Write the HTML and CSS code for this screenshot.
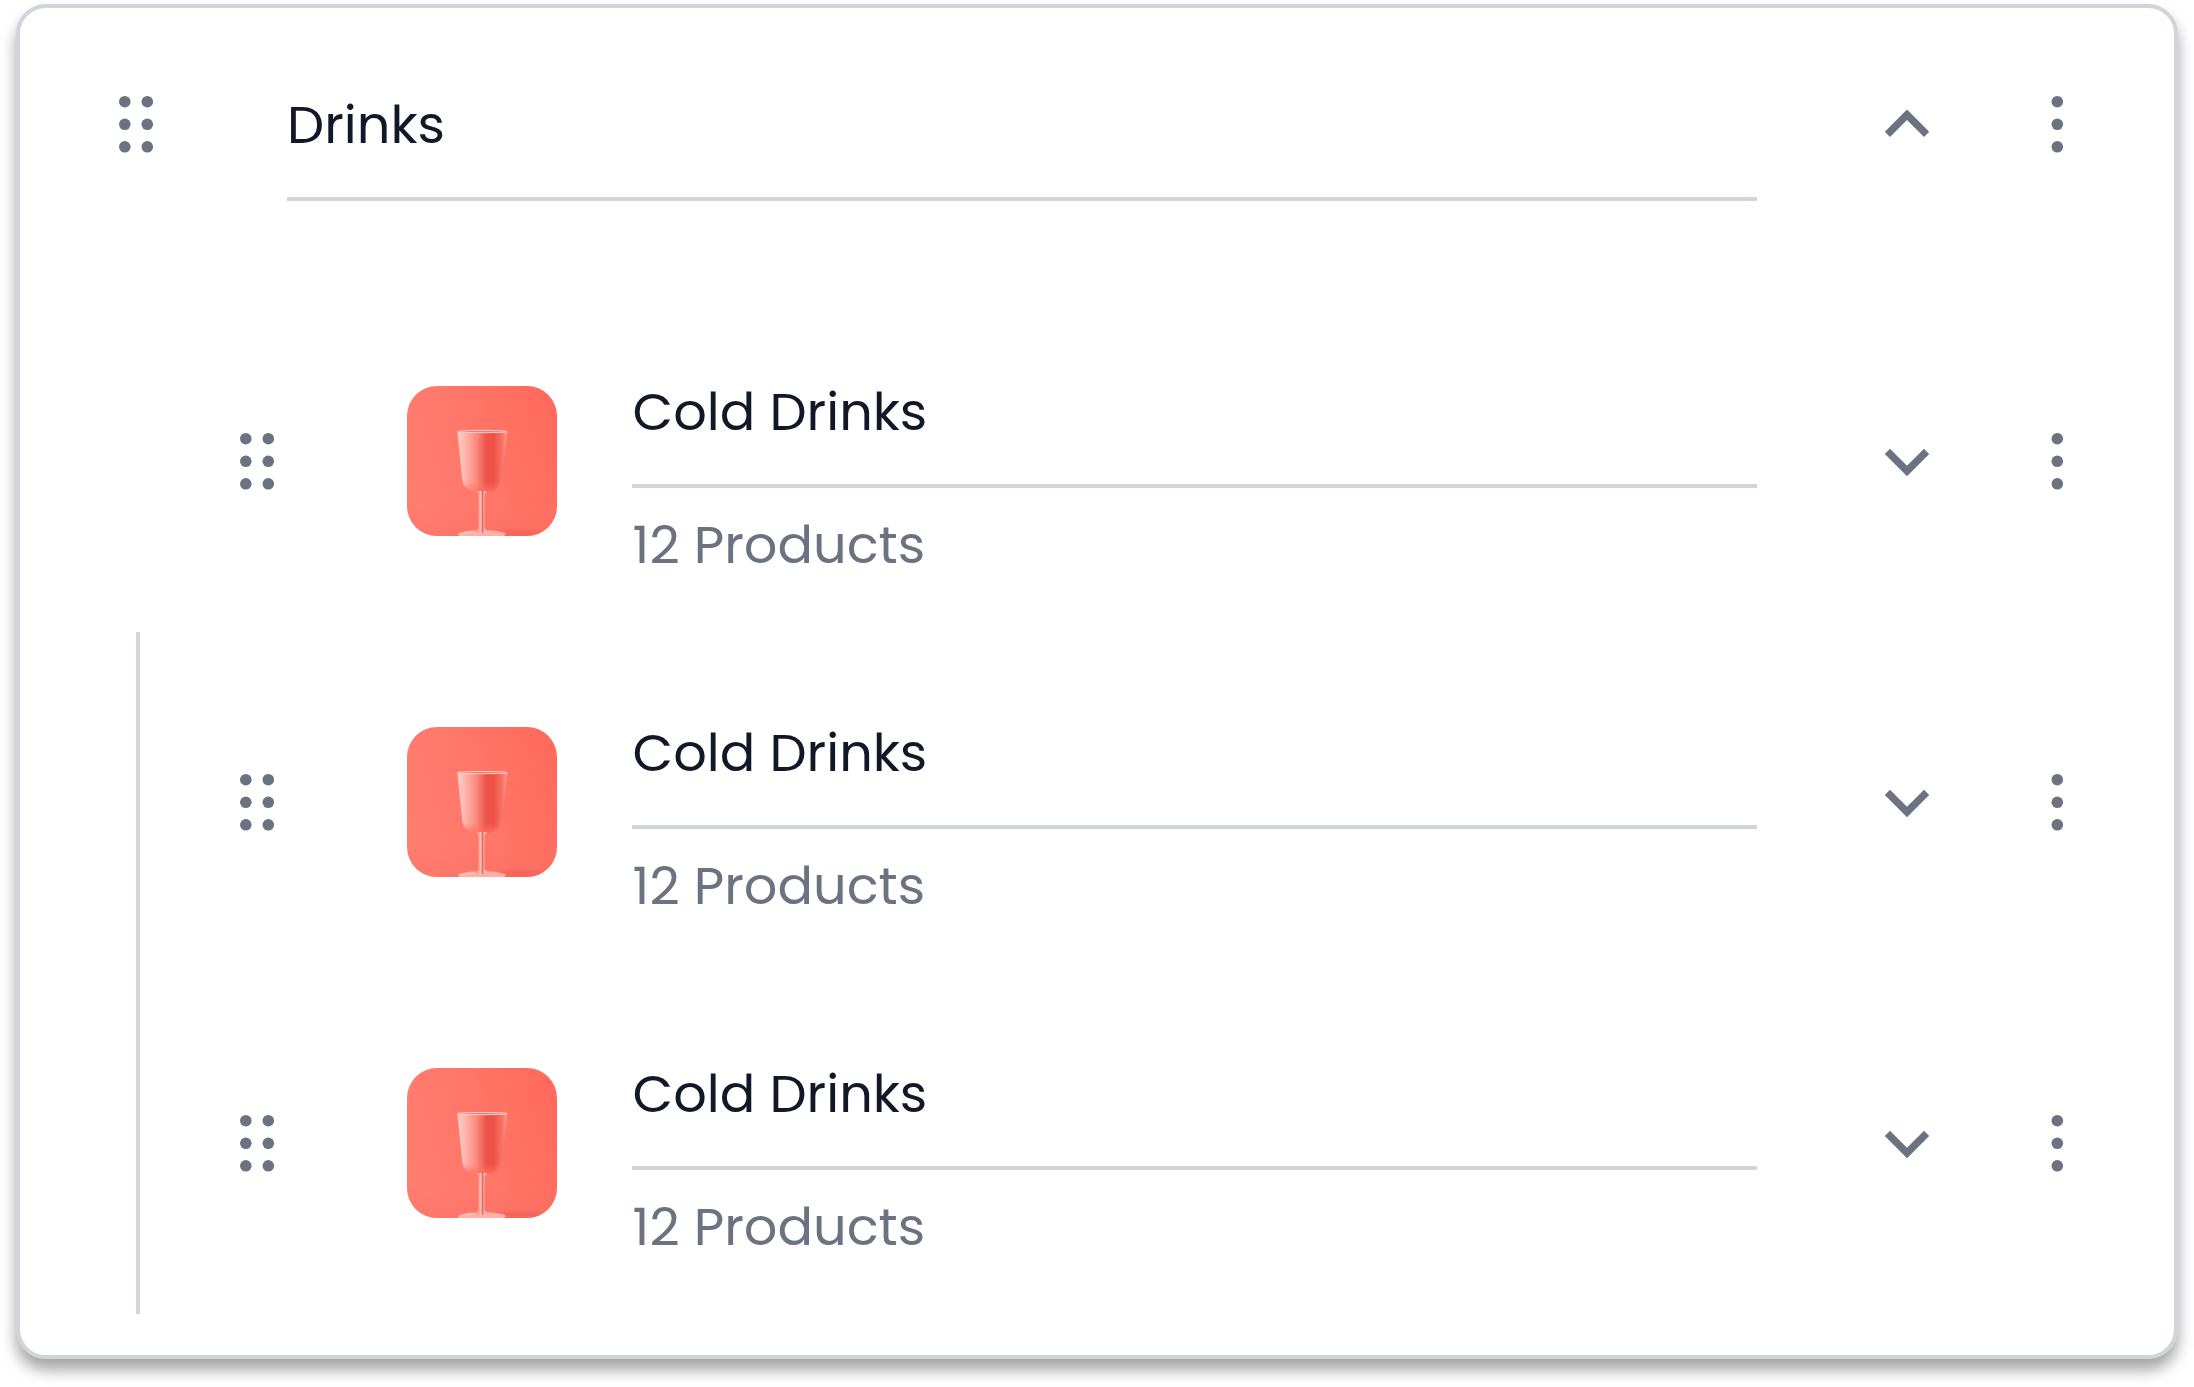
FILE: index.html
```html
<!DOCTYPE html>
<html lang="en">
<head>
<meta charset="utf-8">
<title>Drinks</title>
<link rel="stylesheet" href="styles.css">
</head>
<body>
<svg class="sprite" aria-hidden="true">
  <defs>
    <linearGradient id="wall" x1="0" y1="0.6" x2="1" y2="0.3">
      <stop offset="0" stop-color="#ff7e70"/><stop offset="0.5" stop-color="#ff7668"/><stop offset="1" stop-color="#ff6a5c"/>
    </linearGradient>
    <linearGradient id="floor" x1="0" y1="0" x2="0" y2="1">
      <stop offset="0" stop-color="#f96d61" stop-opacity="0"/><stop offset="1" stop-color="#f96d61" stop-opacity="0.4"/>
    </linearGradient>
    <linearGradient id="bowl" x1="0" y1="0" x2="1" y2="0">
      <stop offset="0" stop-color="#ffcdc6"/><stop offset="0.12" stop-color="#ffbcb3"/><stop offset="0.38" stop-color="#fb8a7e"/><stop offset="0.58" stop-color="#ee5248"/><stop offset="0.72" stop-color="#ee5046"/><stop offset="0.9" stop-color="#f97568"/><stop offset="1" stop-color="#ffa196"/>
    </linearGradient>
    <linearGradient id="bowl-end" x1="0" y1="0" x2="0" y2="1">
      <stop offset="0.84" stop-color="#ff7164" stop-opacity="0"/><stop offset="1" stop-color="#ff7164" stop-opacity="0.8"/>
    </linearGradient>
    <linearGradient id="stem" gradientUnits="userSpaceOnUse" x1="71.5" y1="0" x2="77.5" y2="0">
      <stop offset="0" stop-color="#ff9a8e"/><stop offset="0.4" stop-color="#ffc6be"/><stop offset="0.65" stop-color="#e8685e"/><stop offset="1" stop-color="#ffb5ab"/>
    </linearGradient>
    <radialGradient id="shade">
      <stop offset="0" stop-color="#e9574d" stop-opacity="0.6"/><stop offset="1" stop-color="#e9574d" stop-opacity="0"/>
    </radialGradient>
  </defs>
  <symbol id="glass" viewBox="0 0 150 150">
    <rect width="150" height="150" fill="url(#wall)"/>
    <rect y="118" width="150" height="32" fill="url(#floor)"/>
    <ellipse cx="112" cy="147" rx="36" ry="6" fill="url(#shade)"/>
    <path d="M50.3 45.5 L55 92 Q56 105 70 105.5 H80 Q93 105 94.5 92 L100.5 45.5 Z" fill="url(#bowl)"/>
    <path d="M50.3 45.5 L55 92 Q56 105 70 105.5 H80 Q93 105 94.5 92 L100.5 45.5 Z" fill="url(#bowl-end)"/>
    <ellipse cx="75.4" cy="45.6" rx="24.6" ry="1.1" fill="#f4776b" stroke="#ffd0c9" stroke-width="1"/>
    <ellipse cx="75" cy="148.3" rx="23.8" ry="4" fill="#ffb0a6"/>
    <path d="M52 150 Q54 146.5 71 145.5" fill="none" stroke="#ffd0c9" stroke-width="0.8"/>
    <path d="M69.500 105 Q71.500 107 71.500 111 L71.300 141 Q71 144 67 145.5 Q75 148 82 145.5 Q77.8 144 77.500 141 L77.500 111 Q77.500 107 80 105 Z" fill="url(#stem)"/>
  </symbol>
  <symbol id="drag" viewBox="0 0 90 90">
    <circle cx="33.8" cy="22.7" r="5.8"/><circle cx="56.3" cy="22.7" r="5.8"/>
    <circle cx="33.8" cy="45.3" r="5.8"/><circle cx="56.3" cy="45.3" r="5.8"/>
    <circle cx="33.8" cy="67.8" r="5.8"/><circle cx="56.3" cy="67.8" r="5.8"/>
  </symbol>
  <symbol id="more" viewBox="0 0 90 90">
    <circle cx="45.3" cy="22.7" r="5.8"/><circle cx="45.3" cy="45.3" r="5.8"/><circle cx="45.3" cy="67.8" r="5.8"/>
  </symbol>
  <symbol id="up" viewBox="0 0 90 90">
    <path d="M22.8 52.8 L45 30.6 L67.2 52.8 L62 58 L45 41 L28 58 Z"/>
  </symbol>
  <symbol id="down" viewBox="0 0 90 90">
    <path d="M22.8 38 L45 60.2 L67.2 38 L62 32.8 L45 49.8 L28 32.8 Z"/>
  </symbol>
</svg>

<main class="card">
  <header class="row row-parent">
    <svg class="icon"><use href="#drag"/></svg>
    <div class="info"><div class="title">Drinks</div></div>
    <svg class="icon"><use href="#up"/></svg>
    <svg class="icon"><use href="#more"/></svg>
  </header>
  <section class="list">
    <div class="row row-child">
      <svg class="icon"><use href="#drag"/></svg>
      <svg class="thumb"><use href="#glass"/></svg>
      <div class="info"><div class="title">Cold Drinks</div><div class="count">12 Products</div></div>
      <svg class="icon"><use href="#down"/></svg>
      <svg class="icon"><use href="#more"/></svg>
    </div>
    <div class="row row-child">
      <svg class="icon"><use href="#drag"/></svg>
      <svg class="thumb"><use href="#glass"/></svg>
      <div class="info"><div class="title">Cold Drinks</div><div class="count">12 Products</div></div>
      <svg class="icon"><use href="#down"/></svg>
      <svg class="icon"><use href="#more"/></svg>
    </div>
    <div class="row row-child">
      <svg class="icon"><use href="#drag"/></svg>
      <svg class="thumb"><use href="#glass"/></svg>
      <div class="info"><div class="title">Cold Drinks</div><div class="count">12 Products</div></div>
      <svg class="icon"><use href="#down"/></svg>
      <svg class="icon"><use href="#more"/></svg>
    </div>
  </section>
</main>
</body>
</html>
```

FILE: styles.css
```css
* { box-sizing: border-box; }

body {
  margin: 0;
  height: 1387px;
  padding: 4px 16px 28px;
  overflow: hidden;
  background: #fff;
  font-family: Poppins, Inter, sans-serif;
}

.sprite { position: absolute; width: 0; height: 0; }

.card {
  height: 1355px;
  padding: 40px 72px 0 71px;
  border: 4px solid #d1d5db;
  border-radius: 30px;
  background: #fff;
  box-shadow: 0 11px 15px rgba(0, 0, 0, 0.36);
}

.row { display: flex; align-items: center; }

.row-parent { height: 153px; }

.row-parent .info { flex: 0 0 1470px; margin: 0 105px 0 106px; }

.list { margin: 90px 0 0 45px; }

.row-child {
  height: 341px;
  padding-left: 72px;
  border-left: 4px solid transparent;
}

.row-child + .row-child { border-left-color: #d1d5db; }

.row-child .info { flex: 0 0 1125px; margin: 0 105px 0 75px; }

.row-child .title,
.row-child .count { padding-left: 0.6px; }

.icon {
  flex: none;
  width: 90px;
  height: 90px;
  margin-bottom: 1px;
  fill: #6b7280;
}

.info + .icon { margin-right: 60px; }

.thumb {
  flex: none;
  width: 150px;
  height: 150px;
  margin: 0 0 1px 105px;
  border-radius: 30px;
}

.title {
  height: 153px;
  padding-top: 4px;
  border-bottom: 4px solid #d1d5db;
  color: #111827;
  font-size: 52.6px;
  line-height: 146px;
  white-space: nowrap;
}

.count {
  height: 100px;
  padding-top: 13px;
  color: #6b7280;
  font-size: 52.6px;
  line-height: 88px;
  white-space: nowrap;
}
```
